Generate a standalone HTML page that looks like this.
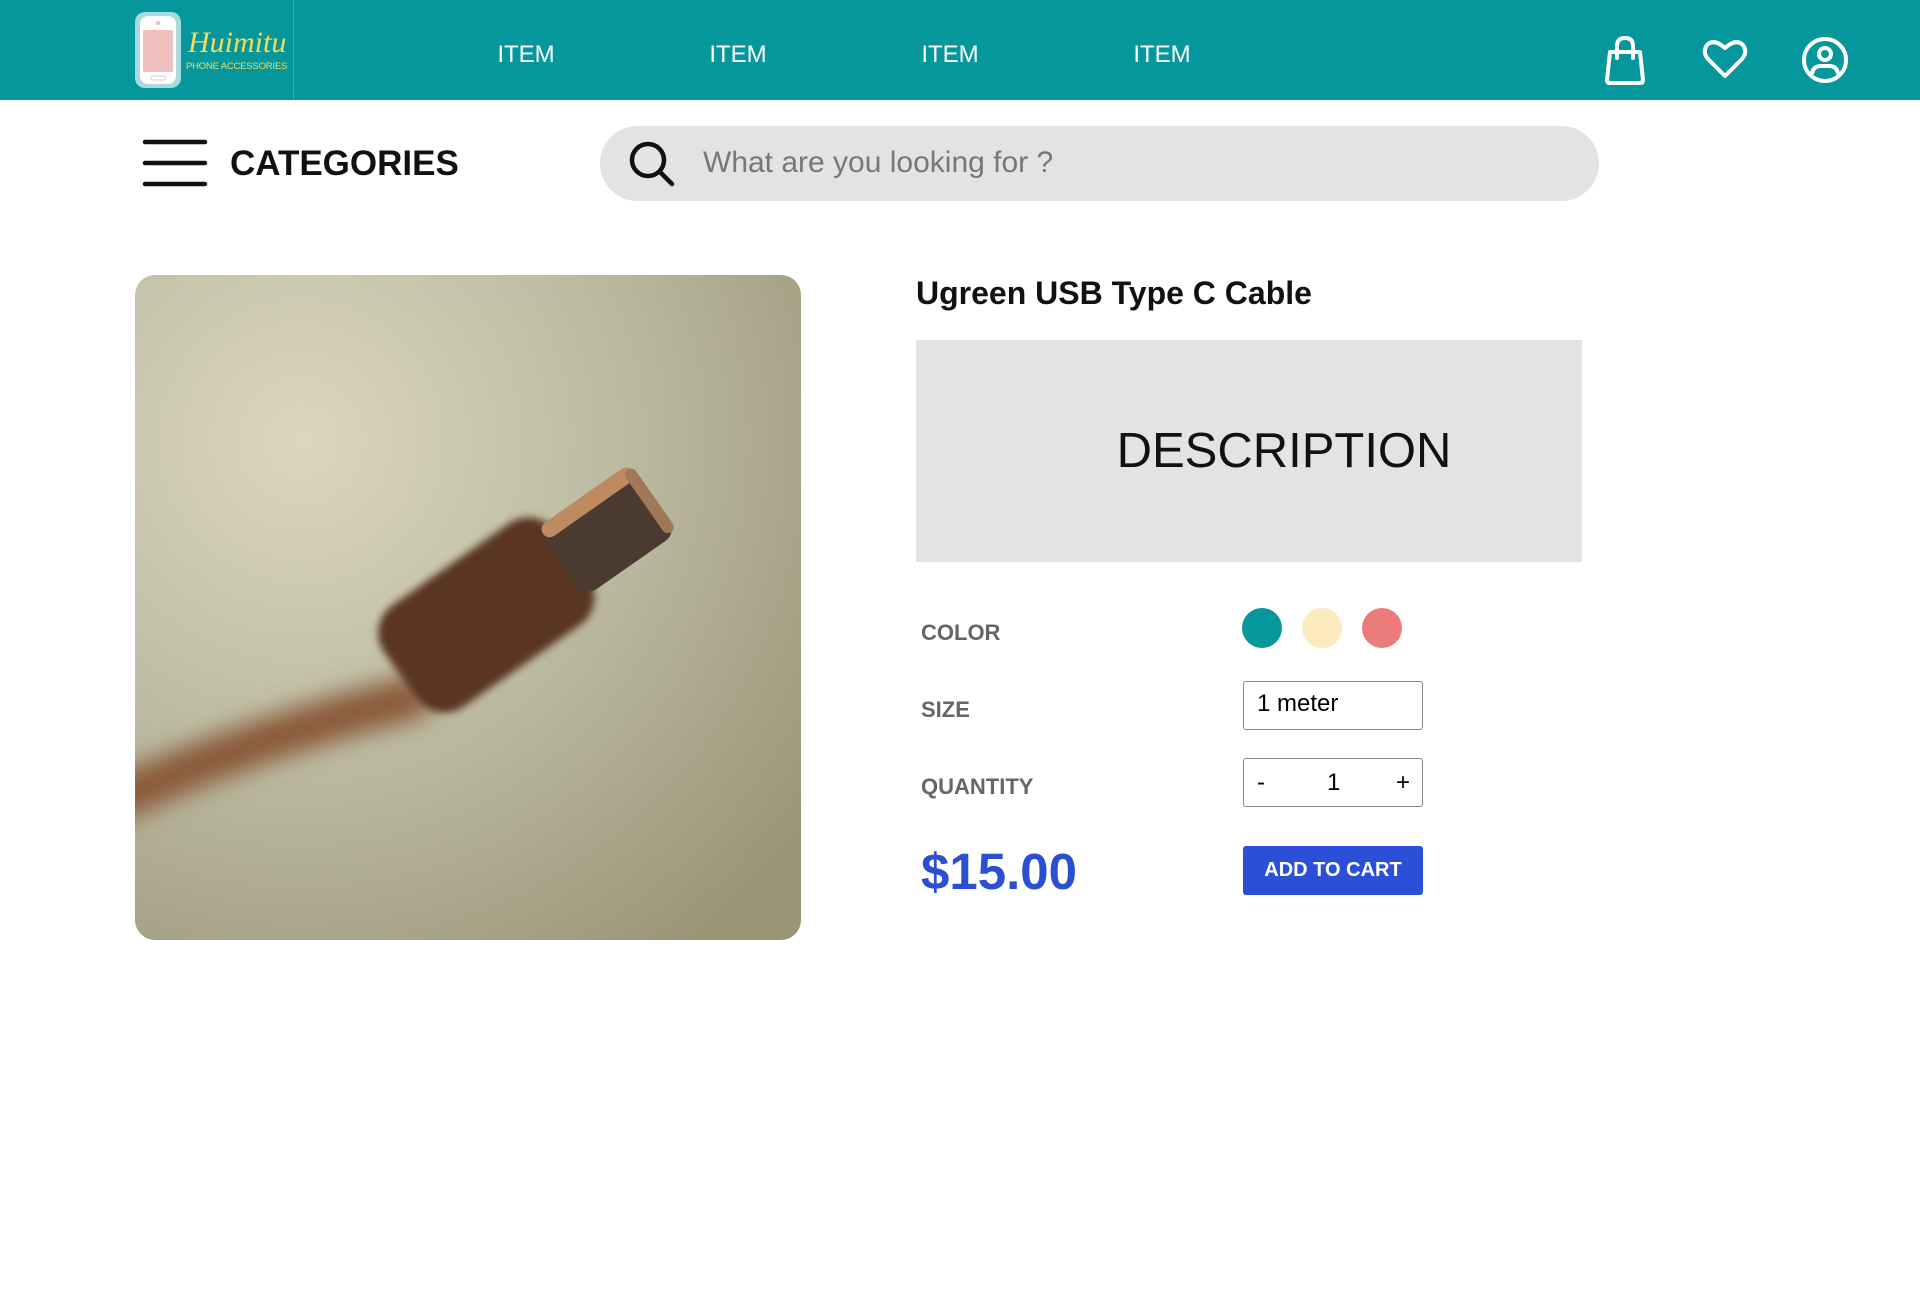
<!DOCTYPE html>
<html><head><meta charset="utf-8"><style>
*{margin:0;padding:0;box-sizing:border-box}
body{width:1920px;height:1300px;background:#fff;font-family:"Liberation Sans",sans-serif;position:relative;overflow:hidden}
.hdr{position:absolute;left:0;top:0;width:1920px;height:100px;background:#05979c}
.nav{position:absolute;top:41px;color:#fff;font-size:24px;transform:translateX(-50%)}
.abs{position:absolute}
.lbl{position:absolute;left:921px;font-size:22px;font-weight:bold;color:#666;transform:translateY(-50%)}
.dot{position:absolute;width:40px;height:40px;border-radius:50%;top:608px}
</style></head><body>
<div class="hdr">
  <svg class="abs" style="left:133px;top:10px" width="50" height="80" viewBox="0 0 50 80">
    <rect x="2" y="2" width="46" height="76" rx="10" fill="#a8dcdc"/>
    <rect x="7" y="6" width="36" height="68" rx="8" fill="#fff"/>
    <circle cx="25" cy="13" r="2" fill="#f0b8b8"/>
    <rect x="10" y="20" width="30" height="42" rx="2" fill="#f0c0c0"/>
    <rect x="18" y="66" width="14" height="4" rx="2" fill="none" stroke="#f0c0c0"/>
  </svg>
  <div class="abs" style="left:188px;top:26px;font-family:'Liberation Serif',serif;font-style:italic;font-size:30px;color:#f4dc5a">Huimitu</div>
  <div class="abs" style="left:186px;top:61px;font-size:9.5px;color:#f4dc5a;letter-spacing:-0.2px">PHONE ACCESSORIES</div>
  <div class="abs" style="left:293px;top:0;width:1px;height:100px;background:#2bb0b3"></div>
  <div class="nav" style="left:526px">ITEM</div>
  <div class="nav" style="left:738px">ITEM</div>
  <div class="nav" style="left:950px">ITEM</div>
  <div class="nav" style="left:1162px">ITEM</div>
  <svg class="abs" style="left:1600px;top:34px" width="50" height="52" viewBox="0 0 50 52" fill="none" stroke="#fff" stroke-width="4" stroke-linejoin="round" stroke-linecap="round">
    <path d="M10 18 H40 L43 46 Q43 49 40 49 H10 Q7 49 7 46 Z"/><path d="M17 24 V12 Q17 4 25 4 Q33 4 33 12 V24"/>
  </svg>
  <svg class="abs" style="left:1702px;top:38px" width="46" height="42" viewBox="0 0 46 42" fill="none" stroke="#fff" stroke-width="4" stroke-linejoin="round">
    <path d="M23 38 L6 21 Q0 14 5 7 Q12 0 23 10 Q34 0 41 7 Q46 14 40 21 Z"/>
  </svg>
  <svg class="abs" style="left:1801px;top:36px" width="48" height="48" viewBox="0 0 48 48" fill="none" stroke="#fff" stroke-width="4">
    <circle cx="24" cy="24" r="21"/><circle cx="24" cy="18" r="6"/><path d="M11 38 Q12 30 20 30 H28 Q36 30 37 38"/>
  </svg>
</div>
<svg class="abs" style="left:142px;top:138px" width="66" height="50" viewBox="0 0 66 50" stroke="#111" stroke-width="4.5" stroke-linecap="round"><path d="M3 4H63M3 25H63M3 46H63"/></svg>
<div class="abs" style="left:230px;top:144px;font-size:35px;font-weight:bold;color:#111">CATEGORIES</div>
<div class="abs" style="left:600px;top:126px;width:999px;height:75px;border-radius:38px;background:#e3e3e3"></div>
<svg class="abs" style="left:628px;top:140px" width="48" height="48" viewBox="0 0 48 48" fill="none" stroke="#111" stroke-width="4.5" stroke-linecap="round"><circle cx="20" cy="20" r="16"/><path d="M32 32 L44 44"/></svg>
<div class="abs" style="left:703px;top:146px;font-size:30px;color:#777">What are you looking for ?</div>
<svg class="abs" style="left:135px;top:275px;border-radius:20px" width="666" height="665" viewBox="0 0 666 665">
  <defs>
    <radialGradient id="bg" cx="0.25" cy="0.25" r="0.95"><stop offset="0" stop-color="#dcd6c0"/><stop offset="0.5" stop-color="#bcbba2"/><stop offset="1" stop-color="#9c9578"/></radialGradient>
    <filter id="b1" x="-50%" y="-50%" width="200%" height="200%"><feGaussianBlur stdDeviation="12"/></filter>
    <filter id="b2" x="-50%" y="-50%" width="200%" height="200%"><feGaussianBlur stdDeviation="4"/></filter>
  </defs>
  <rect width="666" height="665" fill="url(#bg)"/>
  <path d="M-30 530 Q120 460 290 420" stroke="#8a5a3a" stroke-width="44" fill="none" filter="url(#b1)"/>
  <g transform="translate(380,320) rotate(-35)">
    <rect x="-140" y="-62" width="210" height="124" rx="34" fill="#5a3420" filter="url(#b2)"/>
    <rect x="55" y="-42" width="115" height="84" rx="16" fill="#4a3a30"/>
    <rect x="58" y="-42" width="110" height="16" rx="8" fill="#c08a60"/>
    <rect x="158" y="-38" width="12" height="76" rx="6" fill="#a07858"/>
  </g>
</svg>
<div class="abs" style="left:916px;top:275px;font-size:32px;font-weight:bold;color:#111">Ugreen USB Type C Cable</div>
<div class="abs" style="left:916px;top:340px;width:666px;height:222px;background:#e3e3e3;display:flex;align-items:center;justify-content:center;font-size:49px;color:#111;padding-left:70px">DESCRIPTION</div>
<div class="lbl" style="top:633px">COLOR</div>
<div class="lbl" style="top:710px">SIZE</div>
<div class="lbl" style="top:787px">QUANTITY</div>
<div class="dot" style="left:1242px;background:#05979c"></div>
<div class="dot" style="left:1302px;background:#fdebc0"></div>
<div class="dot" style="left:1362px;background:#ec7c7c"></div>
<div class="abs" style="left:1243px;top:681px;width:180px;height:49px;border:1px solid #888;border-radius:3px;font-size:24px;padding:8px 13px">1 meter</div>
<div class="abs" style="left:1243px;top:758px;width:180px;height:49px;border:1px solid #888;border-radius:3px;font-size:24px">
  <span class="abs" style="left:13px;top:10px">-</span><span class="abs" style="left:83px;top:10px">1</span><span class="abs" style="left:152px;top:10px">+</span></div>
<div class="abs" style="left:921px;top:842px;font-size:51px;font-weight:bold;color:#2a4fd0">$15.00</div>
<div class="abs" style="left:1243px;top:846px;width:180px;height:49px;background:#2b4fd6;border-radius:3px;color:#fff;font-weight:bold;font-size:20px;display:flex;align-items:center;justify-content:center">ADD TO CART</div>
</body></html>
